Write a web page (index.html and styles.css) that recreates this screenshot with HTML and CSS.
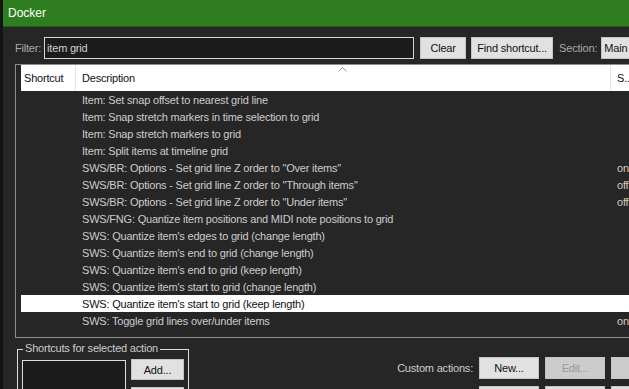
FILE: index.html
```html
<!DOCTYPE html>
<html>
<head>
<meta charset="utf-8">
<link rel="stylesheet" href="styles.css">
</head>
<body>
<div class="frame">
  <div class="strip"></div>
  <div class="main">
    <div class="title">Docker</div>
    <div class="filterbar">
      <span class="lbl">Filter:</span>
      <div class="input">item grid</div>
      <div class="btn btn-clear">Clear</div>
      <div class="btn btn-find">Find shortcut...</div>
      <span class="lbl sec">Section:</span>
      <div class="btn btn-main">Main</div>
    </div>
    <div class="list">
      <div class="head">
        <div class="c1">Shortcut</div>
        <div class="c2">Description
          <svg class="sort" width="9" height="5" viewBox="0 0 9 5"><path d="M0.5 4.5 L4.5 0.5 L8.5 4.5" fill="none" stroke="#9a9a9a" stroke-width="1"/></svg>
        </div>
        <div class="c3">S...</div>
      </div>
      <div class="rows">
        <div class="row"><span class="d">Item: Set snap offset to nearest grid line</span><span class="s"></span></div>
        <div class="row"><span class="d">Item: Snap stretch markers in time selection to grid</span><span class="s"></span></div>
        <div class="row"><span class="d">Item: Snap stretch markers to grid</span><span class="s"></span></div>
        <div class="row"><span class="d">Item: Split items at timeline grid</span><span class="s"></span></div>
        <div class="row"><span class="d">SWS/BR: Options - Set grid line Z order to "Over items"</span><span class="s">on</span></div>
        <div class="row"><span class="d">SWS/BR: Options - Set grid line Z order to "Through items"</span><span class="s">off</span></div>
        <div class="row"><span class="d">SWS/BR: Options - Set grid line Z order to "Under items"</span><span class="s">off</span></div>
        <div class="row"><span class="d">SWS/FNG: Quantize item positions and MIDI note positions to grid</span><span class="s"></span></div>
        <div class="row"><span class="d">SWS: Quantize item's edges to grid (change length)</span><span class="s"></span></div>
        <div class="row"><span class="d">SWS: Quantize item's end to grid (change length)</span><span class="s"></span></div>
        <div class="row"><span class="d">SWS: Quantize item's end to grid (keep length)</span><span class="s"></span></div>
        <div class="row"><span class="d">SWS: Quantize item's start to grid (change length)</span><span class="s"></span></div>
        <div class="row sel"><span class="d">SWS: Quantize item's start to grid (keep length)</span><span class="s"></span></div>
        <div class="row"><span class="d">SWS: Toggle grid lines over/under items</span><span class="s">on</span></div>
      </div>
    </div>
    <div class="bottom">
      <div class="group">
        <div class="legend">Shortcuts for selected action</div>
        <div class="gbody">
          <div class="sclist"></div>
          <div class="gbtns">
            <div class="btn btn-add">Add...</div>
            <div class="btn btn-add"></div>
          </div>
        </div>
      </div>
      <div class="custom">
        <div class="crow">
          <span class="lbl clbl">Custom actions:</span>
          <div class="btn cbtn">New...</div>
          <div class="btn cbtn dis">Edit...</div>
          <div class="btn cbtn dis">D</div>
        </div>
        <div class="crow">
          <div class="btn cbtn"></div>
          <div class="btn cbtn"></div>
          <div class="btn cbtn"></div>
        </div>
      </div>
    </div>
  </div>
</div>
</body>
</html>
```
FILE: styles.css
```css
* { box-sizing: border-box; }
html, body { margin: 0; padding: 0; }
body {
  width: 629px; height: 389px; overflow: hidden;
  background: #262626;
  font-family: "Liberation Sans", Arial, sans-serif;
  font-size: 11px;
  letter-spacing: -0.2px;
  color: #cccccc;
}
.frame { display: flex; width: 629px; height: 389px; }
.strip { width: 3px; flex: none; background: #141414; }
.main { flex: 1; min-width: 0; display: flex; flex-direction: column; overflow: hidden; }
.title {
  height: 27px; flex: none;
  background: #2e7d1f;
  color: #ffffff;
  font-size: 12px;
  letter-spacing: 0;
  padding: 6px 0 0 5px;
  border-bottom: 1px solid #1f5a14;
}
.filterbar {
  display: flex; align-items: center;
  margin-top: 10px; height: 22px;
  padding-left: 12px;
  white-space: nowrap;
}
.lbl { color: #a9a9a9; }
.input {
  width: 370px; height: 22px; margin-left: 3px;
  border: 1px solid #d8d8d8;
  background: #1c1c1c;
  color: #d0d0d0;
  padding: 4px 0 0 2px;
  flex: none;
}
.btn {
  flex: none;
  background: #e1e1e1;
  color: #111;
  height: 22px;
  display: flex; align-items: center; justify-content: center;
  border: 1px solid #c4c4c4;
}
.btn-clear { width: 46px; margin-left: 6px; }
.btn-find { width: 82px; margin-left: 5px; }
.sec { margin-left: 6px; }
.btn-main { width: 40px; margin-left: 4px; justify-content: flex-start; padding-left: 2px; }
.list {
  margin: 5px 0 0 12px;
  height: 274px; flex: none;
  border: 1px solid #8d8d8d;
  border-right: none;
  display: flex; flex-direction: column;
  overflow: hidden;
}
.head {
  height: 26px; flex: none;
  background: #ffffff; color: #111;
  display: flex; align-items: center;
  border-left: 5px solid #262626;
  white-space: nowrap;
}
.head > div { height: 100%; display: flex; align-items: center; flex: none; }
.c1 { width: 55px; padding-left: 3px; border-right: 1px solid #e5e5e5; }
.c2 { width: 535px; padding-left: 6px; border-right: 1px solid #e5e5e5; position: relative; }
.c3 { padding-left: 6px; }
.sort { position: absolute; left: 262px; top: 2px; }
.rows { display: flex; flex-direction: column; padding-left: 5px; }
.row {
  height: 17px; display: flex; align-items: center;
  white-space: nowrap;
}
.row .d { width: 596px; padding-left: 61px; flex: none; }
.row .s { padding-left: 0; }
.row.sel { background: #ffffff; color: #111; }
.bottom { flex: 1; display: flex; justify-content: space-between; padding-left: 14px; }
.group {
  margin-top: 11px;
  width: 172px;
  border: 1px solid #dcdcdc;
  border-bottom: none;
  position: relative;
  padding: 10px 0 0 4px;
}
.legend {
  position: absolute; left: 5px; top: -8px;
  background: #262626; padding: 0 2px;
  color: #cccccc; white-space: nowrap;
}
.gbody { display: flex; gap: 5px; }
.sclist { width: 104px; height: 40px; border: 1px solid #dcdcdc; background: #1c1c1c; }
.gbtns { display: flex; flex-direction: column; gap: 7px; margin-top: -1px; }
.btn-add { width: 53px; height: 21px; }
.custom { display: flex; flex-direction: column; gap: 7px; margin-top: 19px; }
.crow { display: flex; align-items: center; gap: 6px; justify-content: flex-end; margin-right: -42px; }
.clbl { color: #cccccc; margin-right: 0; }
.cbtn { width: 60px; height: 22px; }
.cbtn.dis { background: #cccccc; color: #9a9a9a; border-color: #c4c4c4; }
```
